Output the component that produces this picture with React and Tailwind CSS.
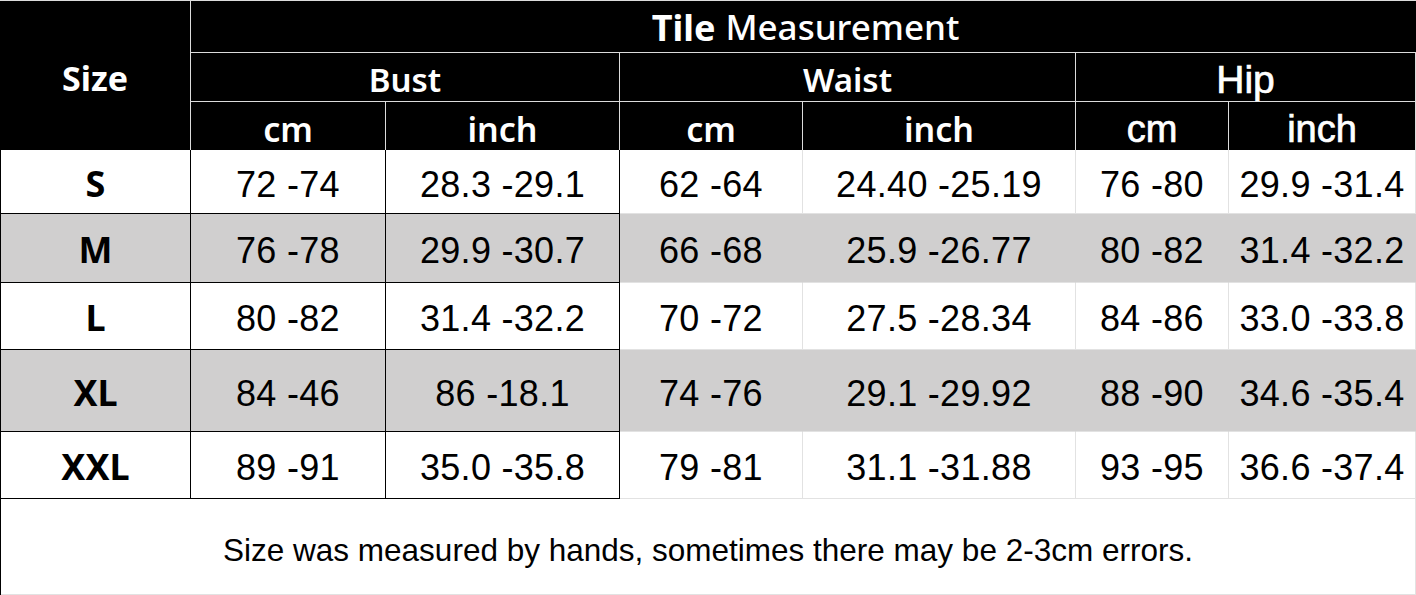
import React from "react";

const rows = [
  { size: "S", gray: false, v: ["72 -74", "28.3 -29.1", "62 -64", "24.40 -25.19", "76 -80", "29.9 -31.4"] },
  { size: "M", gray: true, v: ["76 -78", "29.9 -30.7", "66 -68", "25.9 -26.77", "80 -82", "31.4 -32.2"] },
  { size: "L", gray: false, v: ["80 -82", "31.4 -32.2", "70 -72", "27.5 -28.34", "84 -86", "33.0 -33.8"] },
  { size: "XL", gray: true, v: ["84 -46", "86 -18.1", "74 -76", "29.1 -29.92", "88 -90", "34.6 -35.4"] },
  { size: "XXL", gray: false, v: ["89 -91", "35.0 -35.8", "79 -81", "31.1 -31.88", "93 -95", "36.6 -37.4"] },
];

const heads = "font-['Noto_Sans',sans-serif]";
const arial = "font-['Liberation_Sans',Arial,sans-serif]";

export default function App() {
  return (
    <div className="w-[1416px] h-[595px] bg-white overflow-hidden">
      <div className="grid grid-cols-[191px_195px_234px_183px_273px_153px_187px] grid-rows-[53px_49px_48px_64px_69px_67px_82px_67px]">
        {/* Header */}
        <div className={`row-span-3 bg-black text-white border-r border-[#dcdcdc] border-t flex items-center justify-center pt-[6px] text-[34px] font-bold ${heads}`}>
          Size
        </div>
        <div className={`col-span-6 bg-black text-white border-b border-t border-[#dcdcdc] flex items-center justify-center pt-[2px] pl-[4px] text-[36px] ${heads}`}>
          <span className="font-bold mr-[10px]">Tile</span>
          <span className="font-medium text-[35px]">Measurement</span>
        </div>
        <div className={`col-span-2 bg-black text-white border-b border-r border-[#dcdcdc] flex items-center justify-center pt-[6px] text-[33px] font-semibold ${heads}`}>
          Bust
        </div>
        <div className={`col-span-2 bg-black text-white border-b border-r border-[#dcdcdc] flex items-center justify-center pt-[6px] text-[33px] font-semibold ${heads}`}>
          Waist
        </div>
        <div className={`col-span-2 bg-black text-white border-b border-r border-[#dcdcdc] flex items-center justify-center pt-[6px] text-[39px] [-webkit-text-stroke:0.7px_white] ${arial}`}>
          Hip
        </div>
        {["cm", "inch", "cm", "inch"].map((t, i) => (
          <div
            key={i}
            className={`bg-black text-white border-r border-[#dcdcdc] flex items-center justify-center pt-[6px] text-[34px] font-semibold ${heads}`}
          >
            {t}
          </div>
        ))}
        {["cm", "inch"].map((t, i) => (
          <div
            key={"h" + i}
            className={`bg-black text-white border-r border-[#dcdcdc] flex items-center justify-center pt-[6px] text-[38px] [-webkit-text-stroke:0.7px_white] ${arial}`}
          >
            {t}
          </div>
        ))}

        {/* Body */}
        {rows.map((r) => {
          const bg = r.gray ? "bg-[#d0cfcf]" : "bg-white";
          const light = r.gray ? "border-[#d0cfcf]" : "border-[#e2e2e2]";
          return (
            <React.Fragment key={r.size}>
              <div className={`${bg} border-l border-r border-b border-black flex items-center justify-center pt-[4px] text-[36px] font-bold text-black ${heads}`}>
                {r.size}
              </div>
              {r.v.map((val, i) => {
                const cls =
                  i < 2
                    ? "border-r border-b border-black"
                    : `border-r border-b ${light} border-b-[#e2e2e2]`;
                return (
                  <div
                    key={i}
                    className={`${bg} ${cls} flex items-center justify-center pt-[6px] text-[36px] tracking-[0.3px] text-black ${arial}`}
                  >
                    {val}
                  </div>
                );
              })}
            </React.Fragment>
          );
        })}
      </div>
      <div
        className={`h-[96px] border-l border-black border-r-[#e2e2e2] border-r flex text-[31.5px] text-black ${arial}`}
      >
        <div className="flex-1 h-full flex items-center justify-center pt-[8px] border-b border-[#e2e2e2]">
          Size was measured by hands, sometimes there may be 2-3cm errors.
        </div>
      </div>
    </div>
  );
}
